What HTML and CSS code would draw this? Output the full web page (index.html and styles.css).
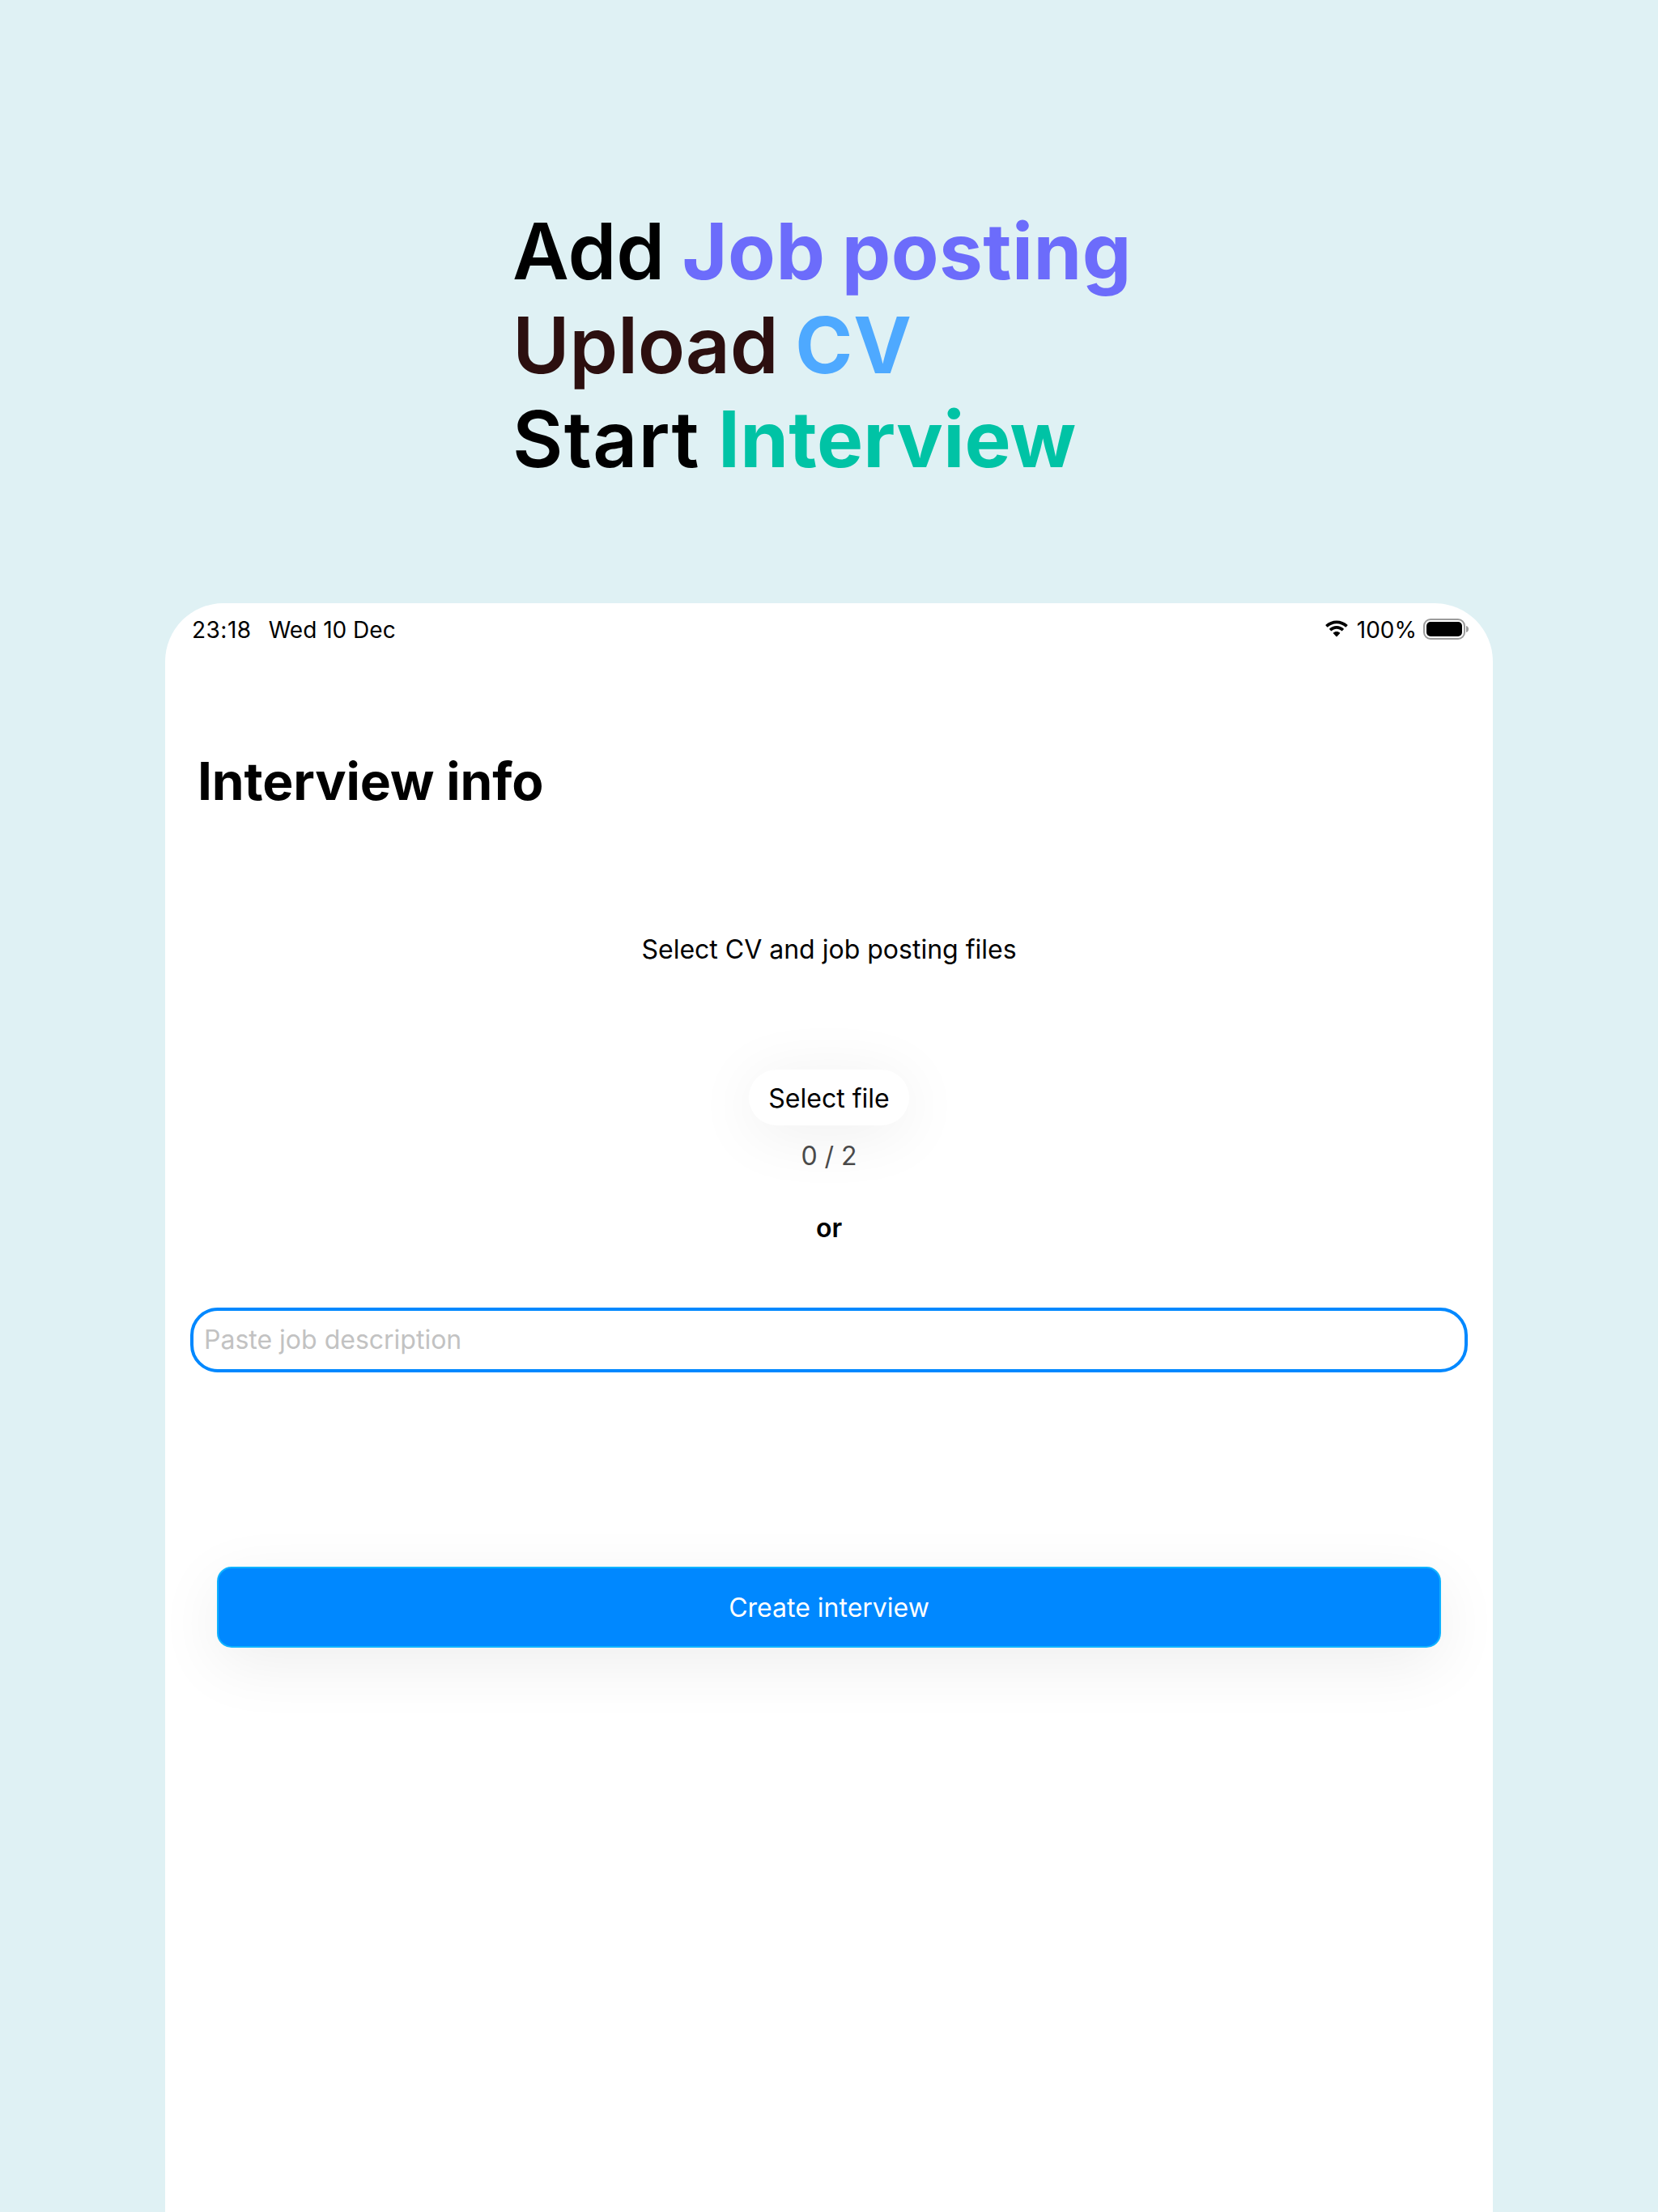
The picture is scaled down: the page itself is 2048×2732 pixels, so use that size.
FILE: index.html
```html
<!DOCTYPE html>
<html lang="en">
<head>
<meta charset="utf-8">
<title>Interview info</title>
<link rel="stylesheet" href="styles.css">
</head>
<body>
<main class="page">
  <h1 class="hero">
    <span class="hero-line">Add <span class="c-purple">Job posting</span></span>
    <span class="hero-line c-brown tight">Upload <span class="c-blue">CV</span></span>
    <span class="hero-line wide">Start <span class="c-green">Interview</span></span>
  </h1>
  <section class="device">
    <div class="status">
      <div class="status-left"><span class="time">23:18</span><span>Wed 10 Dec</span></div>
      <div class="status-right">
        <svg class="wifi" viewBox="0 0 30 22" aria-hidden="true"><path d="M15 4.2c4.2 0 8 1.6 10.9 4.3.2.2.5.2.7 0l1.9-2c.2-.2.2-.5 0-.7C25 2.400 20.200.4 15 .4S5 2.400 1.500 5.800c-.2.2-.2.5 0 .7l1.900 2c.2.2.5.2.7 0C7 5.800 10.800 4.200 15 4.200z"/><path d="M15 10.800c2.400 0 4.600.9 6.200 2.400.2.2.5.2.7 0l1.900-2c.2-.2.2-.5 0-.7C21.500 8.300 18.400 7 15 7s-6.500 1.300-8.800 3.500c-.2.2-.2.5 0 .7l1.900 2c.2.2.5.2.7 0 1.600-1.500 3.800-2.400 6.200-2.400z"/><path d="M19.100 16.300c.2-.2.2-.5 0-.7-1.100-1-2.500-1.600-4.100-1.600s-3 .6-4.100 1.600c-.2.2-.2.5 0 .7l3.700 3.900c.2.2.6.2.8 0z"/></svg>
        <span>100%</span>
        <svg class="battery" viewBox="0 0 56 26" aria-hidden="true"><rect x="1" y="1" width="50" height="24" rx="8" fill="none" stroke="#9b9b9b" stroke-width="2"/><rect x="4" y="4" width="44" height="18" rx="5" fill="#000"/><path d="M53 9c2 .5 3 2 3 4s-1 3.500-3 4z" fill="#9b9b9b"/></svg>
      </div>
    </div>
    <h2 class="title">Interview info</h2>
    <p class="subtitle">Select CV and job posting files</p>
    <button class="select-btn" type="button">Select file</button>
    <p class="count">0 / 2</p>
    <p class="or">or</p>
    <div class="field"><span class="placeholder">Paste job description</span></div>
    <button class="create-btn" type="button">Create interview</button>
  </section>
</main>
</body>
</html>
```
FILE: styles.css
```css
* { box-sizing: border-box; }
html, body { margin: 0; padding: 0; }
body {
  width: 2048px;
  height: 2732px;
  overflow: hidden;
  background: #dff1f4;
  font-family: Inter, "Liberation Sans", sans-serif;
  color: #000;
}
.page { display: flex; flex-direction: column; height: 2732px; }
.hero {
  margin: 0;
  padding: 252px 0 0 633px;
  height: 745px;
  font-size: 96px;
  line-height: 116px;
  font-weight: 600;
  word-spacing: -3px;
}
.hero-line { display: block; white-space: nowrap; }
.tight { letter-spacing: -.3px; }
.wide { letter-spacing: 1.2px; }
.c-purple, .c-blue, .c-green { font-weight: 700; }
.c-purple { color: #6c6cfb; letter-spacing: .5px; }
.c-brown { color: #2c0f0f; }
.c-blue { color: #4ea9ff; letter-spacing: 1px; }
.c-green { color: #00c3a5; letter-spacing: .3px; }
.device {
  flex: 1;
  margin: 0 204px;
  background: #fff;
  border-radius: 72px 72px 0 0;
  display: flex;
  flex-direction: column;
  align-items: center;
}
.status {
  align-self: stretch;
  display: flex;
  justify-content: space-between;
  align-items: center;
  height: 36px;
  margin-top: 15px;
  padding: 0 30px 0 33px;
  font-size: 28px;
  line-height: 36px;
}
.status-left { display: flex; gap: 21px; }
.time { letter-spacing: .5px; }
.status-right { display: flex; align-items: center; }
.wifi { width: 30px; height: 22px; margin: 0 10px 3px 0; }
.battery { width: 56px; height: 26px; margin: 0 0 3px 8px; }
.title {
  align-self: flex-start;
  margin: 128px 0 0 40px;
  font-size: 64px;
  line-height: 82px;
  font-weight: 700;
  letter-spacing: -.1px;
}
.subtitle {
  margin: 145px 0 0;
  font-size: 32px;
  line-height: 44px;
}
.select-btn {
  margin-top: 126px;
  width: 198px;
  height: 69px;
  padding: 2px 0 0;
  border: 0;
  border-radius: 35px;
  background: #fff;
  box-shadow: 0 10px 80px rgba(0, 0, 0, .07);
  font: 400 32px/44px Inter, "Liberation Sans", sans-serif;
  color: #000;
}
.count {
  margin: 16px 0 0;
  font-size: 32px;
  line-height: 44px;
  color: #4a4a4a;
}
.or {
  margin: 45px 0 0;
  font-size: 32px;
  line-height: 44px;
  font-weight: 600;
}
.field {
  align-self: stretch;
  display: flex;
  align-items: center;
  margin: 76px 31px 0;
  height: 80px;
  padding: 0 13px;
  border: 4px solid #0088ff;
  border-radius: 34px;
}
.placeholder { font-size: 32px; line-height: 44px; color: #c2c2c2; }
.create-btn {
  align-self: stretch;
  margin: 240px 64px 0;
  height: 100px;
  padding: 2px 0 0;
  border: 2px solid #0fb2ff;
  border-radius: 18px;
  background: #0088ff;
  box-shadow: 0 20px 80px rgba(0, 0, 0, .07);
  font: 400 32px/44px Inter, "Liberation Sans", sans-serif;
  color: #fff;
}
```
